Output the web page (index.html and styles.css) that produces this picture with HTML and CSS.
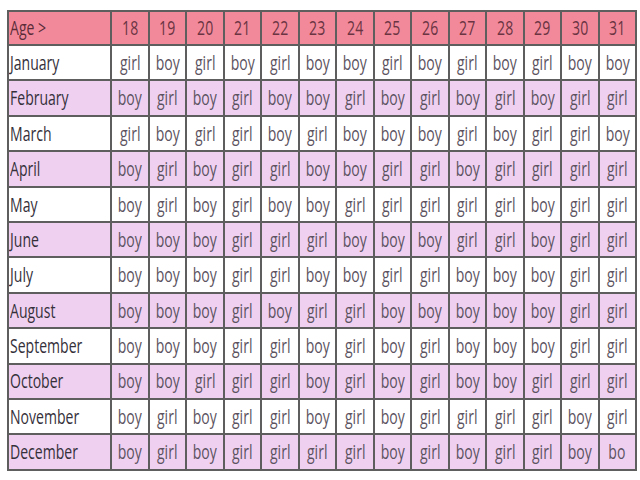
FILE: index.html
```html
<!DOCTYPE html>
<html>
<head>
<meta charset="utf-8">
<link rel="stylesheet" href="styles.css">
</head>
<body>
<table class="chart">
<colgroup><col class="c-month"><col span="14" class="c-age"></colgroup>
<thead>
<tr class="head"><th class="month"><span class="t">Age &gt;</span></th><th><span class="t">18</span></th><th><span class="t">19</span></th><th><span class="t">20</span></th><th><span class="t">21</span></th><th><span class="t">22</span></th><th><span class="t">23</span></th><th><span class="t">24</span></th><th><span class="t">25</span></th><th><span class="t">26</span></th><th><span class="t">27</span></th><th><span class="t">28</span></th><th><span class="t">29</span></th><th><span class="t">30</span></th><th><span class="t">31</span></th></tr>
</thead>
<tbody id="rows"></tbody>
</table>
<script src="script.js"></script>
</body>
</html>
```
FILE: script.js
```js
const data = [
["January","girl boy girl boy girl boy boy girl boy girl boy girl boy boy"],
["February","boy girl boy girl boy boy girl boy girl boy girl boy girl girl"],
["March","girl boy girl girl boy girl boy boy boy girl boy girl girl boy"],
["April","boy girl boy girl girl boy boy girl girl boy girl girl girl girl"],
["May","boy girl boy girl boy boy girl girl girl girl girl boy girl girl"],
["June","boy boy boy girl girl girl boy boy boy girl girl boy girl girl"],
["July","boy boy boy girl girl boy boy girl girl boy boy boy girl girl"],
["August","boy boy boy girl boy girl girl boy boy boy boy boy girl girl"],
["September","boy boy boy girl girl boy girl boy girl boy boy boy girl girl"],
["October","boy boy girl girl girl boy girl boy girl boy boy girl girl girl"],
["November","boy girl boy girl girl boy girl boy girl girl girl girl boy girl"],
["December","boy girl boy girl girl girl girl boy girl boy girl girl boy bo"]
];
const tb = document.getElementById("rows");
data.forEach(([m, s], i) => {
  const tr = document.createElement("tr");
  tr.className = i % 2 ? "alt" : "plain";
  let h = '<td class="month"><span class="t">' + m + '</span></td>';
  s.split(" ").forEach(v => { h += '<td><span class="t">' + v + '</span></td>'; });
  tr.innerHTML = h;
  tb.appendChild(tr);
});
```
FILE: styles.css
```css
html, body {
  margin: 0;
  padding: 0;
  background: #ffffff;
}
body {
  padding: 10px 0 0 7px;
  font-family: "Open Sans", "Liberation Sans", sans-serif;
}
.chart {
  border-collapse: collapse;
  table-layout: fixed;
  width: 628px;
  border: 2px solid #5e5e5e;
}
.c-month { width: 103px; }
.c-age { width: 37.5px; }
.chart th, .chart td {
  border: 2px solid #5e5e5e;
  height: 33.4px;
  padding: 0;
  text-align: center;
  vertical-align: middle;
  font-size: 19.5px;
  font-weight: 400;
  color: #5c5360;
  line-height: 1;
  overflow: hidden;
  white-space: nowrap;
}
.chart .month {
  text-align: left;
  padding-left: 1px;
  color: #35303a;
  font-weight: 500;
}
.t {
  display: inline-block;
  transform: scaleX(0.72);
  transform-origin: center;
}
.month .t { transform-origin: left center; }
.head th {
  background: #f2899a;
  color: #6a3442;
  height: 32px;
}
.head th.month { color: #5a2c38; }
.plain td { background: #ffffff; }
.alt td { background: #efd0f1; }
```
